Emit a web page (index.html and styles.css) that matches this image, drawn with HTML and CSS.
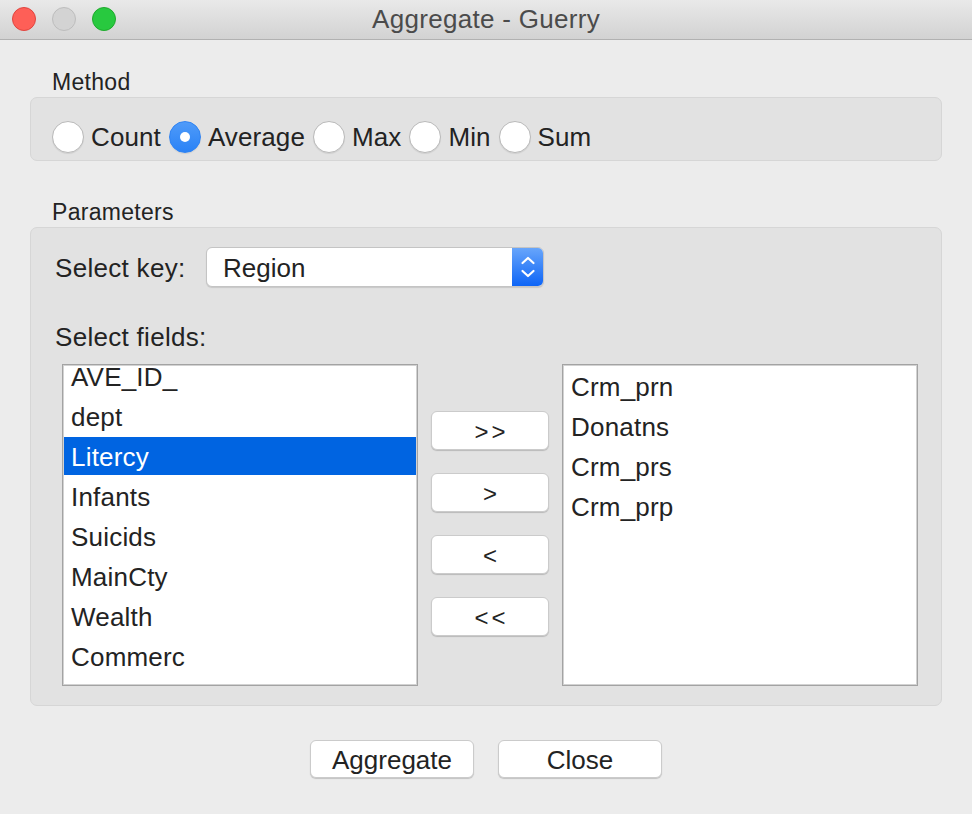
FILE: index.html
```html
<!DOCTYPE html>
<html>
<head>
<meta charset="utf-8">
<title>Aggregate - Guerry</title>
<link rel="stylesheet" href="styles.css">
</head>
<body>
<div class="window">
  <div class="titlebar">
    <div class="lights">
      <span class="light red"></span>
      <span class="light gray"></span>
      <span class="light green"></span>
    </div>
    <div class="title">Aggregate - Guerry</div>
  </div>
  <div class="content">
    <div class="group-label">Method</div>
    <div class="group method">
      <label class="radio"><span class="circle"></span><span>Count</span></label>
      <label class="radio"><span class="circle on"></span><span>Average</span></label>
      <label class="radio"><span class="circle"></span><span>Max</span></label>
      <label class="radio"><span class="circle"></span><span>Min</span></label>
      <label class="radio"><span class="circle"></span><span>Sum</span></label>
    </div>
    <div class="group-label params-label">Parameters</div>
    <div class="group params">
      <div class="key-row">
        <span class="key-label">Select key:</span>
        <div class="select">
          <span class="select-text">Region</span>
          <span class="stepper">
            <svg width="32" height="40" viewBox="0 0 32 40">
              <polyline points="10.5,16 16,11 21.5,16" fill="none" stroke="#fff" stroke-width="2.2" stroke-linecap="round" stroke-linejoin="round"/>
              <polyline points="10.5,24 16,29 21.5,24" fill="none" stroke="#fff" stroke-width="2.2" stroke-linecap="round" stroke-linejoin="round"/>
            </svg>
          </span>
        </div>
      </div>
      <div class="fields-label">Select fields:</div>
      <div class="lists">
        <div class="list left">
          <div class="rows scrolled">
            <div class="row">AVE_ID_</div>
            <div class="row">dept</div>
            <div class="row sel">Litercy</div>
            <div class="row">Infants</div>
            <div class="row">Suicids</div>
            <div class="row">MainCty</div>
            <div class="row">Wealth</div>
            <div class="row">Commerc</div>
          </div>
        </div>
        <div class="movers">
          <button class="btn mover">&gt;&gt;</button>
          <button class="btn mover">&gt;</button>
          <button class="btn mover">&lt;</button>
          <button class="btn mover">&lt;&lt;</button>
        </div>
        <div class="list right">
          <div class="rows">
            <div class="row">Crm_prn</div>
            <div class="row">Donatns</div>
            <div class="row">Crm_prs</div>
            <div class="row">Crm_prp</div>
          </div>
        </div>
      </div>
    </div>
    <div class="actions">
      <button class="btn action">Aggregate</button>
      <button class="btn action">Close</button>
    </div>
  </div>
</div>
</body>
</html>
```

FILE: styles.css
```css
* { box-sizing: border-box; }
html, body {
  margin: 0;
  padding: 0;
  background: #ececec;
}
body {
  font-family: "Liberation Sans", Arial, sans-serif;
  color: #232323;
}
.window {
  width: 972px;
  height: 814px;
  background: #ececec;
  overflow: hidden;
}
.titlebar {
  height: 40px;
  background: linear-gradient(#e9e9e9, #d2d2d2);
  border-bottom: 1px solid #b1b1b1;
  display: flex;
  align-items: center;
  position: relative;
}
.lights {
  display: flex;
  gap: 16px;
  padding-left: 12px;
  position: absolute;
  left: 0;
  top: 7px;
}
.light {
  width: 24px;
  height: 24px;
  border-radius: 50%;
  display: block;
}
.light.red { background: #fe5f57; border: 1px solid #e0443e; }
.light.gray { background: #d3d3d3; border: 1px solid #bdbdbd; }
.light.green { background: #28c93f; border: 1px solid #1eaa2c; }
.title {
  flex: 1;
  text-align: center;
  font-size: 26px;
  color: #4b4b4b;
  letter-spacing: 0.3px;
}
.content {
  padding: 28px 30px 0 30px;
}
.group-label {
  font-size: 23px;
  line-height: 28px;
  height: 28px;
  padding-left: 22px;
  margin-bottom: 1px;
  letter-spacing: 0.3px;
}
.params-label {
  margin-top: 37px;
}
.group {
  background: #e2e2e2;
  border: 1px solid #d6d6d6;
  border-radius: 7px;
}
.method {
  height: 64px;
  display: flex;
  align-items: flex-start;
  padding: 22px 0 0 21px;
}
.radio {
  display: flex;
  align-items: center;
  font-size: 26px;
  line-height: 32px;
  margin-right: 8px;
  letter-spacing: 0.1px;
  padding-top: 1px;
}
.radio .circle { margin-top: -1px; }
.circle {
  width: 32px;
  height: 32px;
  border-radius: 50%;
  background: #fff;
  border: 1px solid #b9b9b9;
  box-shadow: 0 1px 1px rgba(0,0,0,0.08);
  margin-right: 7px;
  display: block;
  position: relative;
}
.circle.on {
  background: linear-gradient(#4f9bf9, #2a82f6);
  border-color: #2f83f2;
}
.circle.on::after {
  content: "";
  position: absolute;
  left: 10px;
  top: 10px;
  width: 10px;
  height: 10px;
  border-radius: 50%;
  background: #fff;
}
.params {
  height: 479px;
  padding: 19px 23px 0 24px;
}
.key-row {
  display: flex;
  align-items: center;
  height: 40px;
}
.key-label {
  width: 151px;
  font-size: 26px;
  letter-spacing: 0.3px;
  padding-top: 3px;
}
.select {
  width: 338px;
  height: 40px;
  background: #fff;
  border-radius: 6px;
  border: 1px solid #c4c4c4;
  box-shadow: 0 1px 1px rgba(0,0,0,0.12);
  display: flex;
  align-items: center;
  overflow: hidden;
}
.select-text {
  flex: 1;
  font-size: 26px;
  padding-left: 16px;
  padding-top: 3px;
}
.stepper {
  width: 32px;
  height: 40px;
  background: linear-gradient(#6aa7fb, #0b63f6);
  display: block;
  margin-right: -1px;
}
.stepper svg { display: block; }
.fields-label {
  font-size: 26px;
  line-height: 30px;
  margin-top: 35px;
  letter-spacing: 0.3px;
}
.lists {
  display: flex;
  margin-top: 12px;
  padding-left: 7px;
  gap: 13px;
}
.list {
  width: 356px;
  height: 322px;
  background: #fff;
  border: 1px solid #a3a3a3;
  box-shadow: inset 0 0 0 1px #d2d2d2;
  overflow: hidden;
  padding: 1px;
}
.rows {
  padding-top: 1px;
}
.rows.scrolled {
  margin-top: -10px;
}
.row {
  height: 38px;
  line-height: 40px;
  margin-bottom: 2px;
  font-size: 26px;
  padding-left: 7px;
  letter-spacing: 0.2px;
  white-space: nowrap;
}
.row.sel {
  background: #0064e1;
  color: #fff;
}
.movers {
  width: 118px;
  display: flex;
  flex-direction: column;
  gap: 23px;
  padding-top: 47px;
}
.btn {
  font-family: "Liberation Sans", Arial, sans-serif;
  background: #fff;
  border: 1px solid #cbcbcb;
  border-radius: 6px;
  box-shadow: 0 1px 1px rgba(0,0,0,0.18);
  color: #232323;
  padding: 0;
  margin: 0;
}
.mover {
  height: 39px;
  width: 118px;
  font-size: 24px;
  letter-spacing: 3px;
  padding-left: 3px;
  padding-top: 3px;
}
.actions {
  display: flex;
  justify-content: center;
  gap: 24px;
  margin-top: 34px;
}
.action {
  width: 164px;
  height: 38px;
  font-size: 26px;
  padding-top: 2px;
}
```
